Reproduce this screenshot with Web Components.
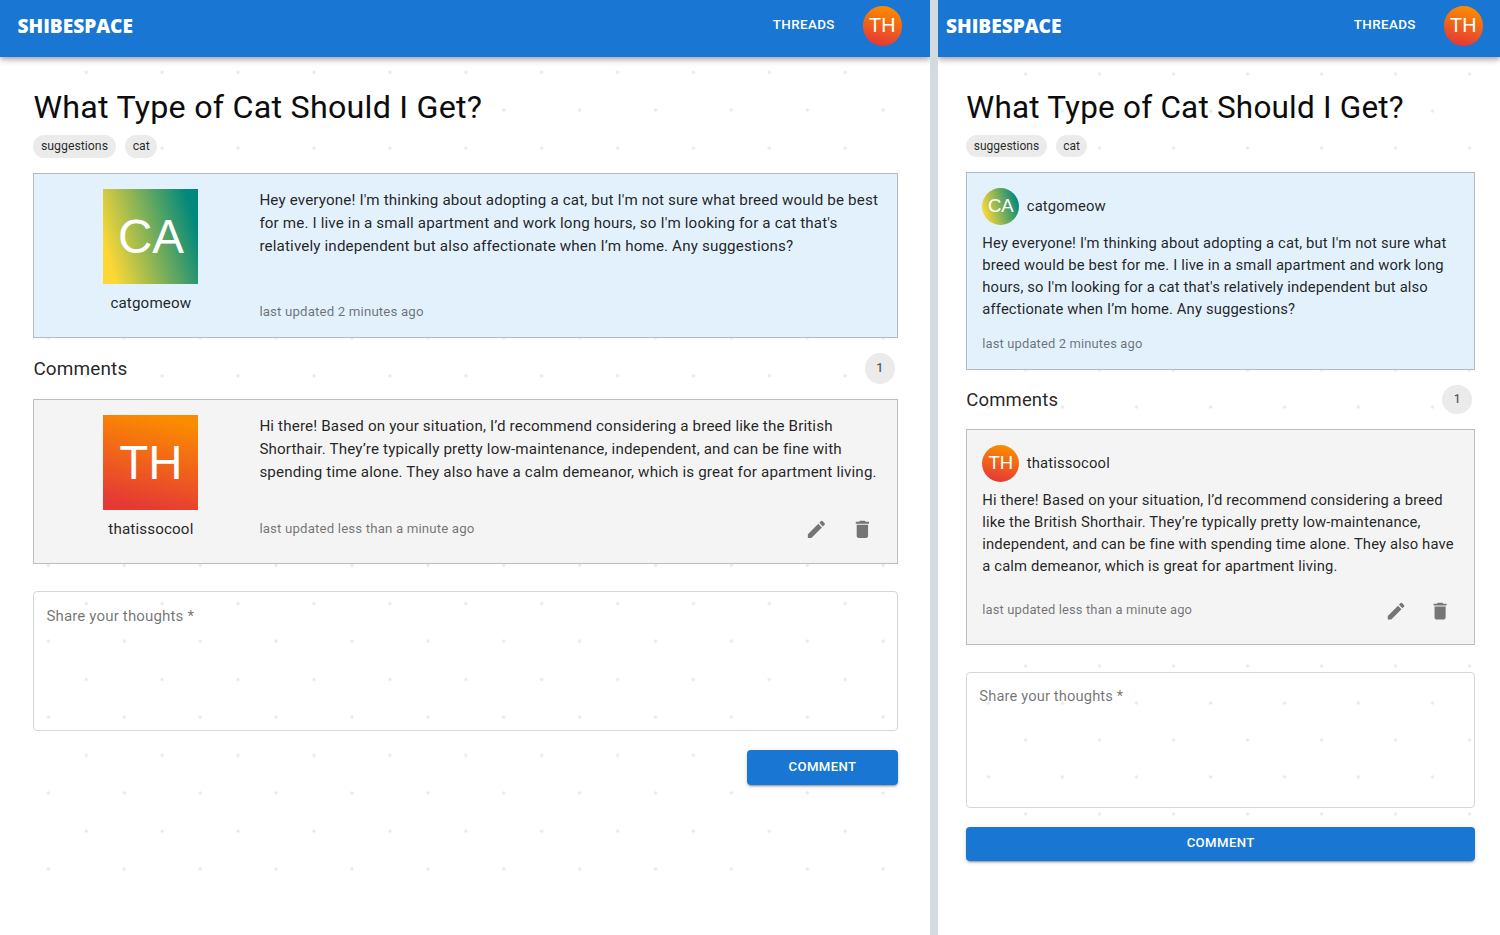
<!DOCTYPE html>
<html lang="en">
<head>
<meta charset="utf-8">
<title>ShibeSpace</title>
<style>
html,body{margin:0;height:100%;overflow:hidden;background:#fff}
body{font-family:Roboto,"Liberation Sans",sans-serif;color:rgba(0,0,0,.87)}
</style>
</head>
<body>
<shibe-workspace>
  <shibe-page id="wide" slot="wide">
    <shibe-header slot="header"></shibe-header>
    <shibe-title>What Type of Cat Should I Get?<shibe-chip slot="tags">suggestions</shibe-chip><shibe-chip slot="tags">cat</shibe-chip></shibe-title>
    <shibe-post variant="op" initials="CA" author="catgomeow" updated="last updated 2 minutes ago">Hey everyone! I'm thinking about adopting a cat, but I'm not sure what breed would be best for me. I live in a small apartment and work long hours, so I'm looking for a cat that's relatively independent but also affectionate when I’m home. Any suggestions?</shibe-post>
    <shibe-count count="1">Comments</shibe-count>
    <shibe-post variant="reply" initials="TH" author="thatissocool" updated="last updated less than a minute ago" editable>Hi there! Based on your situation, I’d recommend considering a breed like the British Shorthair. They’re typically pretty low-maintenance, independent, and can be fine with spending time alone. They also have a calm demeanor, which is great for apartment living.</shibe-post>
    <shibe-field>Share your thoughts *</shibe-field>
    <shibe-button>COMMENT</shibe-button>
  </shibe-page>
  <shibe-page id="narrow" slot="narrow" compact>
    <shibe-header slot="header" compact></shibe-header>
    <shibe-title>What Type of Cat Should I Get?<shibe-chip slot="tags">suggestions</shibe-chip><shibe-chip slot="tags">cat</shibe-chip></shibe-title>
    <shibe-post compact variant="op" initials="CA" author="catgomeow" updated="last updated 2 minutes ago">Hey everyone! I'm thinking about adopting a cat, but I'm not sure what breed would be best for me. I live in a small apartment and work long hours, so I'm looking for a cat that's relatively independent but also affectionate when I’m home. Any suggestions?</shibe-post>
    <shibe-count count="1">Comments</shibe-count>
    <shibe-post compact variant="reply" initials="TH" author="thatissocool" updated="last updated less than a minute ago" editable>Hi there! Based on your situation, I’d recommend considering a breed like the British Shorthair. They’re typically pretty low-maintenance, independent, and can be fine with spending time alone. They also have a calm demeanor, which is great for apartment living.</shibe-post>
    <shibe-field>Share your thoughts *</shibe-field>
    <shibe-button>COMMENT</shibe-button>
  </shibe-page>
</shibe-workspace>

<script>
function define(name, render) {
  customElements.define(name, class extends HTMLElement {
    constructor() { super(); this.attachShadow({ mode: 'open' }); }
    connectedCallback() { this.shadowRoot.innerHTML = render(this); }
  });
}

define('shibe-workspace', () => `
<style>
:host{display:grid;grid-template-columns:929.5px 8.5px 1fr;height:935px;background:#fff}
.bar{background:#d3dae0;position:relative;z-index:1}
</style>
<slot name="wide"></slot><div class="bar"></div><slot name="narrow"></slot>`);

define('shibe-page', () => `
<style>
:host{display:flex;flex-direction:column;min-width:0;position:relative;z-index:0;--u:.948px;--period:75.9px;
  --count-h:61px;--gap:27px;--field-h:140px;--btn-w:151px;--btn-gap:19px;--title-fs:32.25px;--title-h:86.5px;--title-lh:41px;--field-pt:13px}
:host([compact]){--u:.925px;--period:74px;--count-h:59px;--gap:26.5px;--field-h:136.5px;--btn-w:100%;--btn-gap:18.5px;--title-fs:31.45px;--title-h:85.5px;--title-lh:42px;--field-pt:12.5px}
main{flex:1;position:relative;padding:29.5px 31.5px 0 33.4px;
  --d:radial-gradient(circle at center,#e9e9e9 0 1.2px,rgba(235,235,235,0) 2.1px)}
:host([compact]) main{padding:29.5px 25px 0 28.3px}
main::before{content:"";position:absolute;z-index:-1;left:34px;right:30px;top:0;height:818px;
  background-image:var(--d),var(--d);background-size:var(--period) var(--period);
  background-position:14.35px -22.6px,52.3px 15.35px;background-position:14.4px -22.6px,-23.6px 15.35px;
  background-position:14.4px 15.3px,-23.6px -22.6px;
  background-position:calc(14.4px - var(--period)/2) calc(53px - var(--period)/2),calc(52.3px - var(--period)/2) calc(15.3px - var(--period)/2)}
:host([compact]) main::before{left:28px;right:24px;height:775px;
  background-position:calc(22.5px - var(--period)/2) calc(54px - var(--period)/2),calc(59.5px - var(--period)/2) calc(17px - var(--period)/2)}
</style>
<slot name="header"></slot><main><slot></slot></main>`);

define('shibe-avatar', el => `
<style>
:host{display:flex;align-items:center;justify-content:center;width:var(--size);height:var(--size);flex:none;
 color:#fff;font:calc(var(--size)*.5)/1 "Liberation Sans",Arial,sans-serif;letter-spacing:0;
 background:${el.getAttribute('initials') === 'CA'
   ? 'linear-gradient(73deg,#fdd835 10.5%,#00897b 89.5%)'
   : 'linear-gradient(193deg,#fb8c00 9%,#e53935 91%)'}}
:host([round]){border-radius:50%}
</style><span>${el.getAttribute('initials')}</span>`);

define('shibe-header', () => `
<style>
:host{display:flex;align-items:center;height:57px;box-sizing:border-box;padding:0 27.5px 5.5px 17.5px;background:#1976d2;color:#fff;
 box-shadow:0 2px 4px -1px rgba(0,0,0,.2),0 4px 5px rgba(0,0,0,.14),0 1px 10px rgba(0,0,0,.12)}
:host([compact]){padding:0 17px 5.5px 8px}
b{flex:1;font:800 19.1px/24px "Open Sans",sans-serif;padding-top:1px}
a{font-size:13.4px;font-weight:500;letter-spacing:.38px;margin-right:27.700px;padding-bottom:2px}
shibe-avatar{--size:39.5px}
</style>
<b>SHIBESPACE</b><a>THREADS</a><shibe-avatar round initials="TH"></shibe-avatar>`);

define('shibe-title', () => `
<style>
:host{display:block;height:var(--title-h)}
h1{margin:0;font-size:var(--title-fs);font-weight:400;line-height:var(--title-lh);height:40px;letter-spacing:.00735em;white-space:nowrap;color:#0c0c0c}
div{display:flex;gap:calc(10*var(--u));margin-top:8.5px}
</style>
<h1><slot></slot></h1><div><slot name="tags"></slot></div>`);

define('shibe-chip', () => `
<style>
:host{display:block;box-sizing:border-box;height:calc(24*var(--u));line-height:calc(24.500*var(--u));padding:0 calc(8*var(--u));
 border-radius:12px;background:#ebebeb;font-size:calc(13*var(--u));color:rgba(0,0,0,.85)}
</style><slot></slot>`);

define('shibe-post', el => {
  const compact = el.hasAttribute('compact');
  const icons = `<nav>
<svg viewBox="0 0 24 24"><path d="M3 17.25V21h3.75L17.81 9.94l-3.75-3.75L3 17.25zM20.71 7.04c.39-.39.39-1.02 0-1.41l-2.34-2.34a.996.996 0 0 0-1.41 0l-1.83 1.83 3.75 3.75 1.83-1.83z"/></svg>
<svg viewBox="0 0 24 24"><path d="M6 19c0 1.1.9 2 2 2h8c1.1 0 2-.9 2-2V7H6v12zM19 4h-3.500l-1-1h-5l-1 1H5v2h14V4z"/></svg></nav>`;
  return `
<style>
:host{display:flex;box-sizing:border-box;height:165px;padding:15.200px 14px 15px 15px;border:1px solid #b7babd;background:#e3f1fd;
 font-size:calc(16.020*var(--u));line-height:calc(24*var(--u));letter-spacing:.0094em}
:host([variant=reply]){background:#f4f4f4;border-color:#bdbdbd}
:host([compact]){flex-direction:column;height:198px;padding:14.500px 15px;font-size:calc(16*var(--u))}
:host([compact][variant=reply]){height:216px}
.who{flex:none;width:203px;margin-right:7px;display:flex;flex-direction:column;align-items:center;gap:7.500px}
.who shibe-avatar{--size:95px}
:host([compact]) .who{width:auto;flex-direction:row;gap:7.500px;margin:0 0 7.200px}
:host([compact]) .who shibe-avatar{--size:37px}
.body{flex:1;display:flex;flex-direction:column;justify-content:space-between;min-width:0}
p{margin:0}
footer{display:flex;align-items:center;justify-content:space-between;color:rgba(0,0,0,.55);font-size:calc(14*var(--u));
 letter-spacing:.0107em;height:22px}
:host(:not([compact])) footer{margin-bottom:${el.hasAttribute('editable') ? 8 : -1}px}
:host([compact]) footer{margin-bottom:${el.hasAttribute('editable') ? 8 : -1}px}
nav{display:flex;gap:calc(24.500*var(--u));padding:1px calc(9.500*var(--u)) 0 0}
:host([compact]) nav{padding-right:7.500px;gap:22px}
svg{display:block;width:calc(24*var(--u));height:calc(24*var(--u));fill:#757575}
</style>
<div class="who"><shibe-avatar ${compact ? 'round' : ''} initials="${el.getAttribute('initials')}"></shibe-avatar><span>${el.getAttribute('author')}</span></div>
<div class="body"><p><slot></slot></p><footer><span>${el.getAttribute('updated')}</span>${el.hasAttribute('editable') ? icons : ''}</footer></div>`;
});

define('shibe-count', el => `
<style>
:host{display:flex;align-items:center;justify-content:space-between;height:var(--count-h);box-sizing:border-box;padding-right:3px;
 font-size:calc(20*var(--u));letter-spacing:.0075em}
i{display:flex;align-items:center;justify-content:center;width:calc(32*var(--u));height:calc(32*var(--u));border-radius:50%;
 background:#ebebeb;font:500 calc(13*var(--u))/1 Roboto,sans-serif;color:rgba(0,0,0,.65)}
</style><span><slot></slot></span><i>${el.getAttribute('count')}</i>`);

define('shibe-field', () => `
<style>
:host{display:block;box-sizing:border-box;margin-top:var(--gap);height:var(--field-h);padding:var(--field-pt) 12px;border:1px solid #d6d6d6;border-radius:4px;
 font-size:calc(15.900*var(--u));line-height:calc(24*var(--u));letter-spacing:.0094em;color:rgba(0,0,0,.56)}
</style><slot></slot>`);

define('shibe-button', () => `
<style>
:host{display:flex;align-items:center;justify-content:center;box-sizing:border-box;width:var(--btn-w);height:34.500px;margin:var(--btn-gap) 0 0 auto;
 padding-bottom:2.500px;border-radius:4px;background:#1976d2;color:#fff;font-size:13.200px;font-weight:500;letter-spacing:.37px;
 box-shadow:0 3px 1px -2px rgba(0,0,0,.2),0 2px 2px rgba(0,0,0,.14),0 1px 5px rgba(0,0,0,.12)}
</style><slot></slot>`);
</script>
</body>
</html>
